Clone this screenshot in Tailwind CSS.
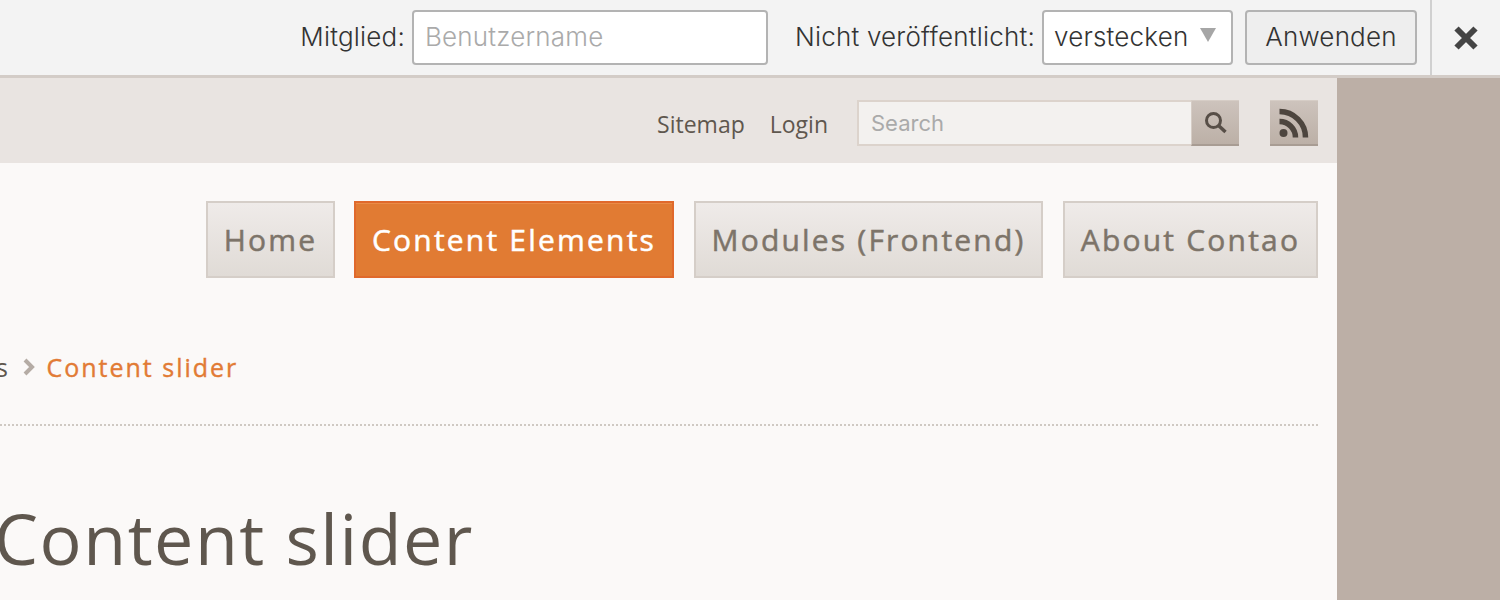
<!DOCTYPE html>
<html lang="de">
<head>
    <meta charset="UTF-8">
    <title>Content slider</title>
    <script src="https://cdn.jsdelivr.net/npm/@tailwindcss/browser@4"></script>
</head>
<body class="h-[600px] overflow-hidden bg-[#bcafa6] font-['Open_Sans',sans-serif]">
    <!-- Vorschau-Leiste -->
    <div class="h-[78px] flex justify-end bg-[#f3f3f3] border-b-[3px] border-[#d3ccc7] font-['Inter',sans-serif] font-light text-[26px] tracking-[0.2px] text-[#333]">
        <form class="flex items-center pb-[1px]">
            <label class="mr-[7px] pb-[2px]">Mitglied:</label>
            <div class="w-[356px] h-[55px] flex items-center pl-[11px] pb-[2px] bg-white border-2 border-[#b3b3b3] rounded-[4px] text-[#aaa]">Benutzername</div>
            <label class="ml-[27px] mr-[7px] pb-[2px]">Nicht veröffentlicht:</label>
            <div class="w-[191px] h-[55px] flex items-center justify-between pl-[10px] pr-[15px] pb-[2px] bg-white border-2 border-[#b3b3b3] rounded-[4px]">
                <span>verstecken</span>
                <svg width="16" height="14" viewBox="0 0 16 14" class="mb-[2px]"><path d="M0 0h16L8 14z" fill="#a6a6a6"/></svg>
            </div>
            <button type="button" class="w-[172px] h-[55px] ml-[12px] pb-[2px] bg-[#eeeeee] border-2 border-[#b3b3b3] rounded-[4px]">Anwenden</button>
        </form>
        <div class="w-[70px] h-[75px] ml-[13px] flex items-center justify-center border-l-2 border-[#d0d0d0]">
            <svg width="26" height="26" viewBox="0 0 26 26"><path d="M3.5 3.5l19 19M22.5 3.5l-19 19" stroke="#444" stroke-width="6"/></svg>
        </div>
    </div>

    <div class="w-[1337px] h-[522px] bg-[#fbf9f8] text-[#5f574e]">
        <!-- Kopfzeile -->
        <div class="h-[85px] flex justify-end items-start pr-[19px] pt-[22px] bg-[#e9e4e1]">
            <a class="text-[23px] mt-[7px] mr-[25px]">Sitemap</a>
            <a class="text-[23px] mt-[7px] mr-[29px]">Login</a>
            <div class="w-[334px] h-[46px] flex items-center pl-[12px] bg-[#f3f1ef] border-2 border-[#dcd3cc] border-r-0 font-['Inter',sans-serif] text-[22px] text-[#aaa]">Search</div>
            <div class="w-[48px] h-[46px] flex items-center justify-center bg-linear-to-b from-[#cdc3bc] to-[#bcb0a7] border-t border-l border-[#d6cdc6] border-b-2 border-b-[#a89c93]">
                <svg width="26" height="26" viewBox="0 0 26 26" fill="none" stroke="#574e47"><circle cx="10.5" cy="10.5" r="7" stroke-width="3"/><path d="M15.5 15.5l7 6.5" stroke-width="3.5"/></svg>
            </div>
            <div class="w-[48px] h-[46px] ml-[31px] flex items-center justify-center bg-linear-to-b from-[#cdc3bc] to-[#bcb0a7] border-t border-[#d6cdc6] border-b-2 border-b-[#a89c93]">
                <svg width="32" height="32" viewBox="0 0 32 32" fill="none" stroke="#4d453e" stroke-width="5.5"><circle cx="5.5" cy="26" r="4" fill="#4d453e" stroke="none"/><path d="M1.5 14.5a16 16 0 0 1 16 16"/><path d="M1.5 4.5a26 26 0 0 1 26 26"/></svg>
            </div>
        </div>

        <!-- Navigation -->
        <nav class="flex justify-end gap-[20px] pt-[38px] pr-[19px] text-[30px] leading-none tracking-[2.2px] [-webkit-text-stroke:0.5px] text-[#7d7469]">
            <a class="h-[77px] w-[129px] mr-[-1px] flex items-center justify-center bg-linear-to-b from-[#efebe9] to-[#e0dbd6] border-2 border-[#d5cec8]">Home</a>
            <a class="h-[77px] w-[320px] flex items-center justify-center bg-[#e17b33] border-2 border-[#e0692c] shadow-[inset_0_1px_0_#ea8c47] text-white">Content Elements</a>
            <a class="h-[77px] w-[349px] flex items-center justify-center bg-linear-to-b from-[#efebe9] to-[#e0dbd6] border-2 border-[#d5cec8]">Modules (Frontend)</a>
            <a class="h-[77px] w-[255px] flex items-center justify-center bg-linear-to-b from-[#efebe9] to-[#e0dbd6] border-2 border-[#d5cec8]">About Contao</a>
        </nav>

        <!-- Breadcrumb -->
        <div class="mr-[19px] h-[148px] pt-[72px] border-b-2 border-dotted border-[#cfc9c3] overflow-hidden">
            <div class="flex items-center h-[36px] text-[25px] tracking-[1.5px] whitespace-nowrap">
                <span class="-ml-[4px]">s</span>
                <svg width="14" height="18" viewBox="0 0 14 18" class="ml-[13px] mb-[2px]" fill="none"><path d="M3 2l7 7-7 7" stroke="#b5aca5" stroke-width="4"/></svg>
                <span class="ml-[10px] tracking-[2px] [-webkit-text-stroke:0.4px] text-[#e27b35]">Content slider</span>
            </div>
        </div>

        <h1 class="mt-[62px] -ml-[6px] text-[70px] leading-[100px] tracking-[1.5px] whitespace-nowrap">Content slider</h1>
    </div>
</body>
</html>
